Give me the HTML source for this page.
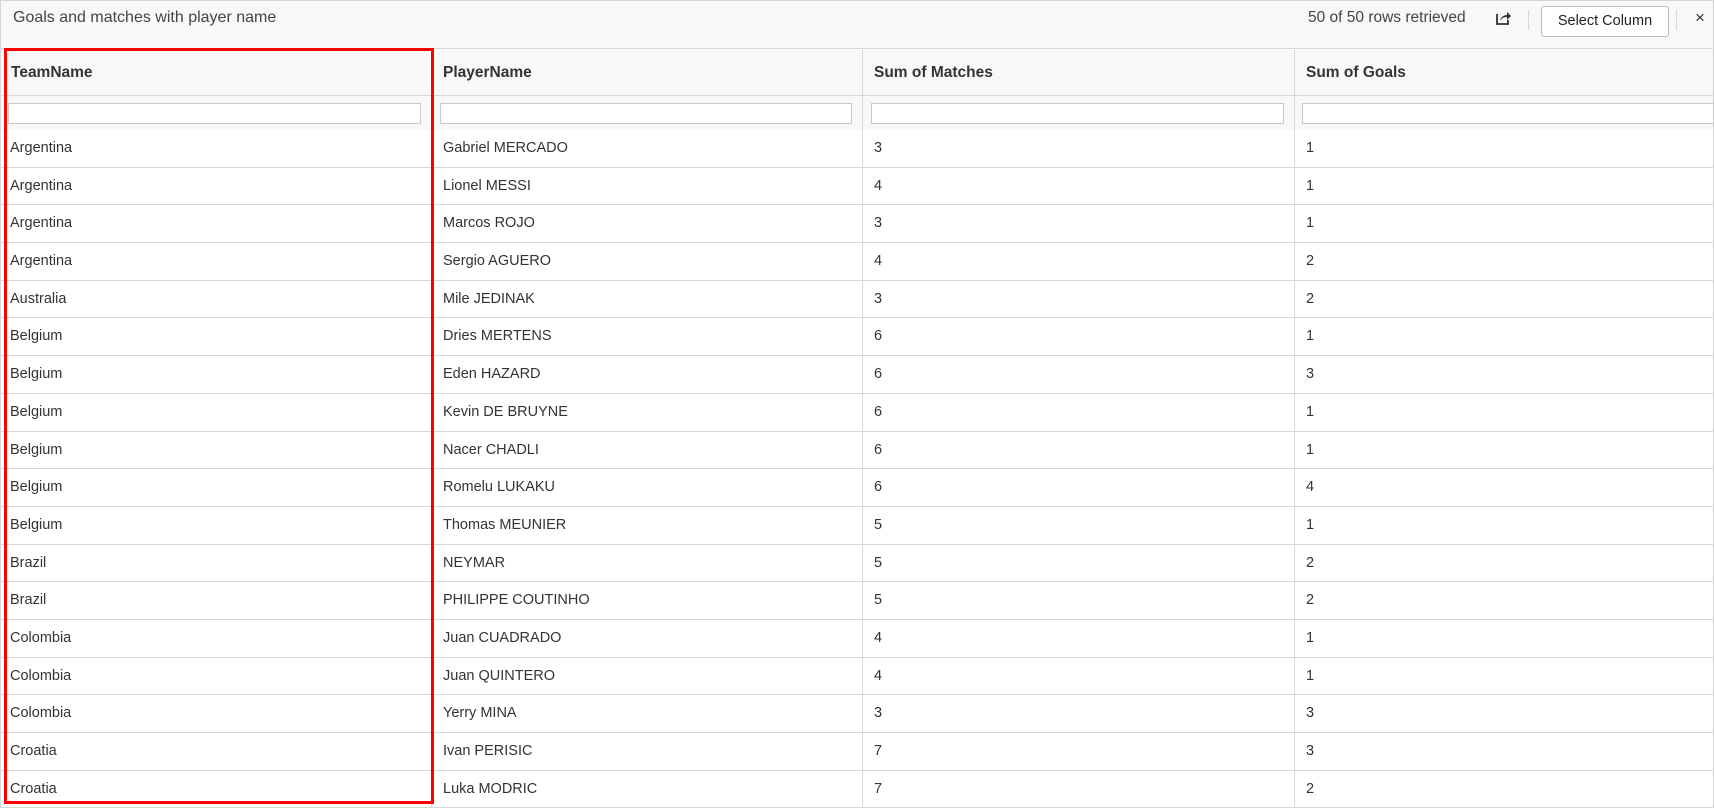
<!DOCTYPE html>
<html><head><meta charset="utf-8"><style>
*{box-sizing:border-box;margin:0;padding:0}
body{width:1714px;height:808px;overflow:hidden;background:#fff;font-family:"Liberation Sans",sans-serif;color:#333;position:relative}
.frame{position:absolute;left:0;top:0;width:1714px;height:808px;border:1px solid #d4d4d4;border-bottom:none}
.top{position:absolute;left:1px;top:1px;width:1712px;height:48px;background:#f8f8f8;border-bottom:1px solid #d6d6d6}
.title{position:absolute;left:12px;top:8px;font-size:16px;color:#444}
.cnt{position:absolute;left:1307px;top:8px;font-size:15.5px;color:#444}
.btn{position:absolute;left:1540px;top:5px;width:128px;height:31px;border:1px solid #bbb;border-radius:3px;background:#fff;font-size:14.5px;color:#222;text-align:center;line-height:29px}
.sep{position:absolute;top:9px;width:1px;height:20px;background:#d8d8d8}
.x{position:absolute;left:1694px;top:7px;font-size:17px;color:#333}
.hdr{position:absolute;left:1px;top:50px;width:1712px;height:80px;background:#f8f8f8}
.hline{position:absolute;left:1px;width:1712px;height:1px;background:#d8d8d8}
.vline{position:absolute;top:50px;width:1px;height:758px;background:#d8d8d8}
.h{position:absolute;top:64px;font-size:15.5px;font-weight:bold;color:#333}
.inp{position:absolute;top:103px;height:21px;border:1px solid #c8c8c8;background:#fff}
.rows{position:absolute;left:1px;top:130px;width:1712px}
.r{height:37.7px;border-bottom:1px solid #d8d8d8;position:relative;font-size:14.5px;color:#333}
.r span{position:absolute;top:10px}
.r span:nth-child(1){left:9px}
.r span:nth-child(2){left:442px}
.r span:nth-child(3){left:873px}
.r span:nth-child(4){left:1305px}
.red{position:absolute;left:4px;top:48px;width:430px;height:756px;border:3px solid #f00}
</style></head><body>
<div class="frame"></div>
<div class="top">
<div class="title">Goals and matches with player name</div>
<div class="cnt">50 of 50 rows retrieved</div>
<svg style="position:absolute;left:1494px;top:9px" width="16" height="16" viewBox="0 0 16 16"><path d="M2 4v10h11v-4" fill="none" stroke="#333" stroke-width="1.8"/><path d="M5 11c1-4 4-6 7-6V2l4 4-4 4V7c-3 0-5 1-7 4z" fill="#333"/></svg>
<div class="sep" style="left:1527px"></div>
<div class="btn">Select Column</div>
<div class="sep" style="left:1675px"></div>
<div class="x">×</div>
</div>
<div class="hdr"></div>
<div class="hline" style="top:95px"></div>
<div class="vline" style="left:431px"></div>
<div class="vline" style="left:862px"></div>
<div class="vline" style="left:1294px"></div>
<div class="h" style="left:11px">TeamName</div>
<div class="h" style="left:443px">PlayerName</div>
<div class="h" style="left:874px">Sum of Matches</div>
<div class="h" style="left:1306px">Sum of Goals</div>
<div class="inp" style="left:8px;width:413px"></div>
<div class="inp" style="left:440px;width:412px"></div>
<div class="inp" style="left:871px;width:413px"></div>
<div class="inp" style="left:1302px;width:412px"></div>
<div class="rows">
<div class="r"><span>Argentina</span><span>Gabriel MERCADO</span><span>3</span><span>1</span></div>
<div class="r"><span>Argentina</span><span>Lionel MESSI</span><span>4</span><span>1</span></div>
<div class="r"><span>Argentina</span><span>Marcos ROJO</span><span>3</span><span>1</span></div>
<div class="r"><span>Argentina</span><span>Sergio AGUERO</span><span>4</span><span>2</span></div>
<div class="r"><span>Australia</span><span>Mile JEDINAK</span><span>3</span><span>2</span></div>
<div class="r"><span>Belgium</span><span>Dries MERTENS</span><span>6</span><span>1</span></div>
<div class="r"><span>Belgium</span><span>Eden HAZARD</span><span>6</span><span>3</span></div>
<div class="r"><span>Belgium</span><span>Kevin DE BRUYNE</span><span>6</span><span>1</span></div>
<div class="r"><span>Belgium</span><span>Nacer CHADLI</span><span>6</span><span>1</span></div>
<div class="r"><span>Belgium</span><span>Romelu LUKAKU</span><span>6</span><span>4</span></div>
<div class="r"><span>Belgium</span><span>Thomas MEUNIER</span><span>5</span><span>1</span></div>
<div class="r"><span>Brazil</span><span>NEYMAR</span><span>5</span><span>2</span></div>
<div class="r"><span>Brazil</span><span>PHILIPPE COUTINHO</span><span>5</span><span>2</span></div>
<div class="r"><span>Colombia</span><span>Juan CUADRADO</span><span>4</span><span>1</span></div>
<div class="r"><span>Colombia</span><span>Juan QUINTERO</span><span>4</span><span>1</span></div>
<div class="r"><span>Colombia</span><span>Yerry MINA</span><span>3</span><span>3</span></div>
<div class="r"><span>Croatia</span><span>Ivan PERISIC</span><span>7</span><span>3</span></div>
<div class="r"><span>Croatia</span><span>Luka MODRIC</span><span>7</span><span>2</span></div>
</div>
<div class="red"></div>
</body></html>
